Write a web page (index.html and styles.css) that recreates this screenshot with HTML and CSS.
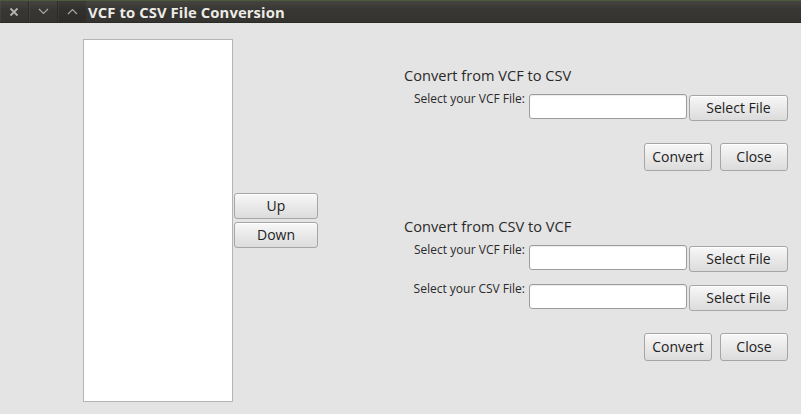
FILE: index.html
```html
<!DOCTYPE html>
<html>
<head>
<meta charset="utf-8">
<link rel="stylesheet" href="styles.css">
</head>
<body>
<div class="titlebar">
  <div class="wbtns">
    <span class="wbtn"><svg width="10" height="10" viewBox="0 0 10 10"><path d="M1.5 1.5 L8.5 8.5 M8.5 1.5 L1.5 8.5" stroke="#b4b4b0" stroke-width="1.8" fill="none"/></svg></span>
    <span class="wbtn"><svg width="11" height="7" viewBox="0 0 11 7"><path d="M1 1 L5.5 5.5 L10 1" stroke="#a8a8a4" stroke-width="1.2" fill="none"/></svg></span>
    <span class="wbtn last"><svg width="11" height="7" viewBox="0 0 11 7"><path d="M1 6 L5.5 1.5 L10 6" stroke="#a8a8a4" stroke-width="1.2" fill="none"/></svg></span>
  </div>
  <div class="title">VCF to CSV File Conversion</div>
</div>
<div class="main">
  <div class="list"></div>
  <div class="updown">
    <button class="btn ud">Up</button>
    <button class="btn ud">Down</button>
  </div>
  <div class="panel">
    <section class="sect">
      <h2 class="head">Convert from VCF to CSV</h2>
      <div class="row">
        <label class="lbl">Select your VCF File:</label>
        <input class="field" type="text">
        <button class="btn sel">Select File</button>
      </div>
      <div class="actions">
        <button class="btn act conv">Convert</button>
        <button class="btn act">Close</button>
      </div>
    </section>
    <section class="sect second">
      <h2 class="head">Convert from CSV to VCF</h2>
      <div class="row">
        <label class="lbl">Select your VCF File:</label>
        <input class="field" type="text">
        <button class="btn sel">Select File</button>
      </div>
      <div class="row">
        <label class="lbl">Select your CSV File:</label>
        <input class="field" type="text">
        <button class="btn sel">Select File</button>
      </div>
      <div class="actions">
        <button class="btn act conv">Convert</button>
        <button class="btn act">Close</button>
      </div>
    </section>
  </div>
</div>
</body>
</html>
```
FILE: styles.css
```css
html, body {
  margin: 0;
  padding: 0;
  background: #e4e4e4;
  width: 801px;
  height: 414px;
  overflow: hidden;
  font-family: "Open Sans", "Noto Sans", sans-serif;
  color: #2c2c2c;
}
.titlebar {
  height: 23px;
  background: linear-gradient(#45443f, #383733 40%, #34332f);
  border-top: 1px solid #4d5a3c;
  box-sizing: border-box;
  border-bottom: 1px solid #2a2a27;
  display: flex;
  align-items: center;
}
.wbtns {
  display: flex;
  height: 100%;
}
.wbtn {
  width: 28px;
  height: 100%;
  display: flex;
  align-items: center;
  justify-content: center;
  border-right: 1px solid #2b2b28;
  box-shadow: inset 1px 0 0 rgba(255,255,255,0.05);
}
.wbtn.last {
  border-right: none;
  background: rgba(0,0,0,0.12);
}
.title {
  margin-left: 2px;
  font-weight: bold;
  font-size: 14.8px;
  color: #ecebe6;
  letter-spacing: 0.1px;
}
.main {
  display: flex;
  padding-left: 83px;
  padding-top: 16px;
}
.list {
  width: 150px;
  height: 363px;
  box-sizing: border-box;
  background: #fff;
  border: 1px solid #b4b4b4;
}
.updown {
  align-self: center;
  margin-left: 1px;
  display: flex;
  flex-direction: column;
  gap: 3px;
}
.btn {
  font-family: "Open Sans", "Noto Sans", sans-serif;
  font-size: 14px;
  color: #222;
  background: linear-gradient(#f8f8f8, #e9e9e9 50%, #dcdcdc);
  border: 1px solid #a6a6a6;
  border-radius: 3px;
  padding: 0;
  margin: 0;
  box-sizing: border-box;
  line-height: 1;
  box-shadow: inset 0 1px 0 #fff;
}
.ud {
  width: 84px;
  height: 26px;
}
.panel {
  margin-left: 87px;
  margin-top: 26px;
  width: 383px;
  align-self: flex-start;
}
.head {
  margin: 0 0 0 -1px;
  font-size: 14.6px;
  font-weight: normal;
  line-height: 20px;
  color: #2a2a2a;
}
.row {
  display: flex;
  justify-content: flex-end;
  align-items: flex-start;
  height: 26px;
  margin-top: 9px;
}
.row + .row {
  margin-top: 13px;
}
.lbl {
  font-size: 12px;
  line-height: 16px;
  margin-top: -3px;
  margin-right: 4px;
  color: #2a2a2a;
}
.field {
  width: 158px;
  height: 25px;
  box-sizing: border-box;
  margin: 0;
  border: 1px solid #9c9c9c;
  border-radius: 3px;
  background: #fff;
  box-shadow: inset 0 1px 1px rgba(0,0,0,0.08);
}
.sel {
  width: 99px;
  height: 26px;
  margin-left: 2px;
  margin-top: 1px;
}
.actions {
  display: flex;
  justify-content: flex-end;
  gap: 8px;
  margin-top: 23px;
}
.act {
  height: 28px;
  width: 68px;
}
.second {
  margin-top: 45px;
}
```
